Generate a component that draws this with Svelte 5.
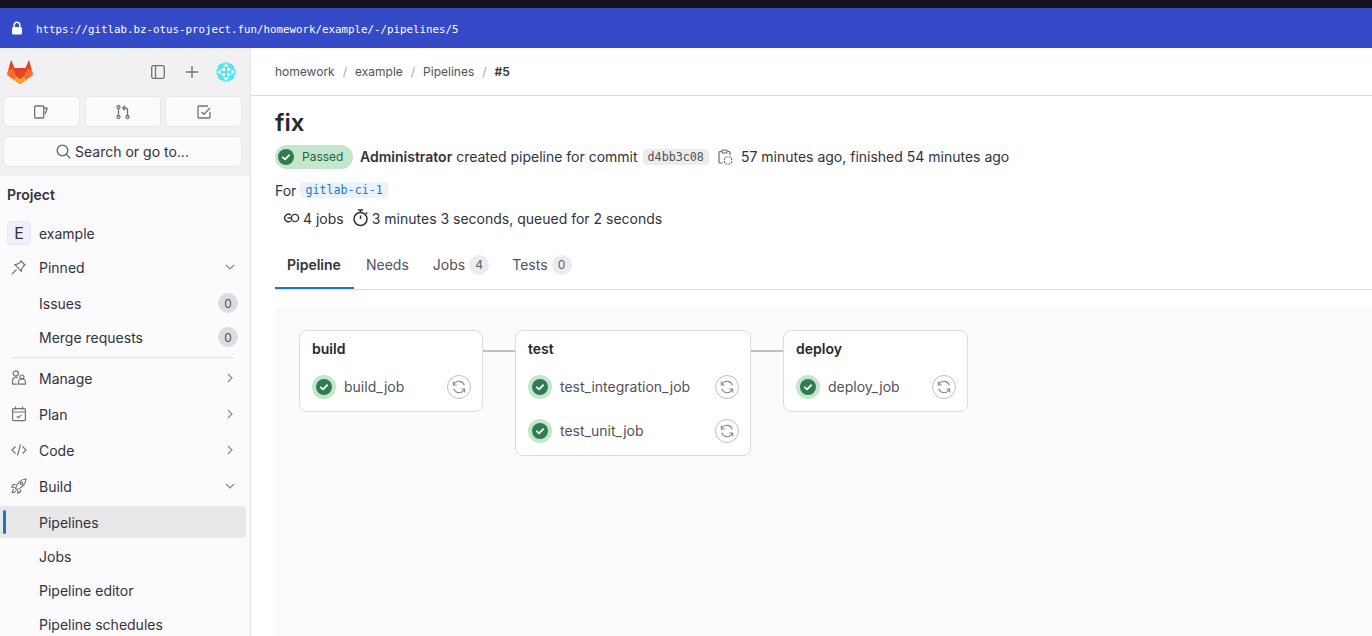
<script>
  const retry = "M13.300 6.300A5.600 5.600 0 0 0 3.700 4.200L2.300 5.800M2.300 2.600v3.400h3.400M2.700 9.700a5.600 5.600 0 0 0 9.600 2.100l1.400-1.600M13.700 13.400V10h-3.400";
  const stages = [
    { name: 'build', cls: 'w1', jobs: ['build_job'] },
    { name: 'test', cls: 'w2', jobs: ['test_integration_job', 'test_unit_job'] },
    { name: 'deploy', cls: 'w3', jobs: ['deploy_job'] }
  ];
</script>

<div class="page">
  <div class="topstrip"></div>
  <div class="urlbar">
    <svg class="lock" width="12" height="14" viewBox="0 0 12 14"><path d="M3.200 6V4a2.800 2.800 0 0 1 5.600 0v2" fill="none" stroke="#fff" stroke-width="1.500"/><rect x="1" y="6" width="10" height="7.500" rx="1.500" fill="#fff"/></svg>
    <span class="url">https://gitlab.bz-otus-project.fun/homework/example/-/pipelines/5</span>
  </div>
  <div class="body">
    <aside class="side">
      <div class="sidetop">
        <div class="logorow">
          <svg class="fox" width="26" height="25" viewBox="0 0 26 25">
            <path d="M13 24 1 15.500c-.6-.5-.8-1.200-.6-1.900L3.500 1.200c.2-.6 1-.6 1.200 0L7.500 8h11l2.800-6.800c.2-.6 1-.6 1.200 0l3.100 12.400c.2.700 0 1.400-.6 1.900z" fill="#e24329"/>
            <path d="M13 24 5.500 8.500 .9 10.500l-.5 3.100c-.2.700 0 1.400.6 1.900z" fill="#fc6d26"/>
            <path d="M13 24l7.500-15.500 4.600 2 .5 3.100c.2.700 0 1.400-.6 1.900z" fill="#fc6d26"/>
            <path d="M13 24l-6.500-4.700L9.500 16.500 13 19l3.500-2.500 3 2.800z" fill="#fca326"/>
          </svg>
          <div class="logoactions">
            <svg width="16" height="16" viewBox="0 0 16 16" fill="none" stroke="#737278" stroke-width="1.300"><rect x="1.700" y="1.700" width="12.600" height="12.600" rx="1.500"/><path d="M5.500 2v12"/></svg>
            <svg class="plus" width="14" height="14" viewBox="0 0 14 14" fill="none" stroke="#737278" stroke-width="1.400"><path d="M7 1v12M1 7h12"/></svg>
            <svg class="avatar" width="24" height="24" viewBox="0 0 24 24">
              <path d="M12 .5c1.200 2 2.500 2.800 4.500 3.200 2 .4 3.500 2 3.800 3.800.4 2 1.200 3.300 3.200 4.500-2 1.200-2.800 2.500-3.200 4.500-.3 1.800-1.800 3.400-3.800 3.800-2 .4-3.300 1.200-4.500 3.200-1.200-2-2.500-2.800-4.500-3.200-2-.4-3.500-2-3.800-3.800C3.300 14.500 2.500 13.200.5 12c2-1.200 2.800-2.500 3.200-4.500.3-1.800 1.800-3.400 3.800-3.800C9.500 3.300 10.800 2.500 12 .5z" fill="#55e2f2"/>
              <path d="M12 3.500 20.500 12 12 20.500 3.500 12z" fill="#fff"/>
              <path d="M12 .5v3M12 20.500v3M.5 12h3M20.500 12h3" stroke="#fff" stroke-width="1"/>
              <rect x="6.500" y="6.500" width="11" height="11" fill="#55e2f2"/>
              <rect x="8" y="8" width="3" height="3" fill="#fff"/><rect x="13" y="8" width="3" height="3" fill="#fff"/><rect x="8" y="13" width="3" height="3" fill="#fff"/><rect x="13" y="13" width="3" height="3" fill="#fff"/>
            </svg>
          </div>
        </div>
        <div class="tri">
          <div class="tribtn"><svg width="16" height="16" viewBox="0 0 16 16" fill="none" stroke="#737278" stroke-width="1.300"><path d="M2.700 2h7a1 1 0 0 1 1 1v10a1 1 0 0 1-1 1h-7a1 1 0 0 1-1-1V3a1 1 0 0 1 1-1zM10.700 4h2.800c.5 0 .7.400.6.800l-2.100 5.200"/></svg></div>
          <div class="tribtn"><svg width="16" height="16" viewBox="0 0 16 16" fill="none" stroke="#737278" stroke-width="1.300"><circle cx="3.500" cy="3" r="1.500"/><circle cx="3.500" cy="13" r="1.500"/><circle cx="12.500" cy="13" r="1.500"/><path d="M3.500 4.500v7M12.500 11.500V6a2 2 0 0 0-2-2H8M9.800 1.700 7.800 4l2 2.300"/></svg></div>
          <div class="tribtn last"><svg width="16" height="16" viewBox="0 0 16 16" fill="none" stroke="#737278" stroke-width="1.300"><path d="M14 8v5a1 1 0 0 1-1 1H3a1 1 0 0 1-1-1V3a1 1 0 0 1 1-1h9M5.500 8l2.300 2.300L14 4"/></svg></div>
        </div>
        <div class="search">
          <svg width="15" height="15" viewBox="0 0 15 15" fill="none" stroke="#626168" stroke-width="1.300"><circle cx="6.500" cy="6.500" r="5.300"/><path d="m10.400 10.400 3.800 3.800"/></svg>
          <span>Search or go to...</span>
        </div>
      </div>
      <div class="project">Project</div>
      <div class="item projrow"><span class="ebox">E</span><span>example</span></div>
      <div class="item h36">
        <svg class="ic" width="16" height="16" viewBox="0 0 16 16" fill="none" stroke="#737278" stroke-width="1.200"><path d="M1 15l4.600-4.600M9.500 1.500l5 5M10.500 2.500 6.300 5.200 3.800 5.700l6.500 6.500.5-2.500 2.700-4.200"/></svg>
        <span>Pinned</span><svg class="chev" width="12" height="12" viewBox="0 0 12 12" fill="none" stroke="#89888d" stroke-width="1.200"><path d="m2 4 4 4 4-4"/></svg>
      </div>
      <div class="item sub r1"><span>Issues</span><span class="count">0</span></div>
      <div class="item sub r2"><span>Merge requests</span><span class="count">0</span></div>
      <div class="divider"></div>
      <div class="item h36">
        <svg class="ic" width="16" height="16" viewBox="0 0 16 16" fill="none" stroke="#737278" stroke-width="1.200"><circle cx="4.800" cy="3.500" r="2.600"/><path d="M6.800 8.200A3 3 0 0 0 4.800 7.500a3.300 3.300 0 0 0-3.300 3.300v2.700c0 .4.300.7.700.7h3.800"/><circle cx="11" cy="7" r="2"/><path d="M7.500 12a3.500 3 0 0 1 7 0v2.200h-7z"/></svg>
        <span>Manage</span><svg class="chev" width="12" height="12" viewBox="0 0 12 12" fill="none" stroke="#89888d" stroke-width="1.200"><path d="m4 2 4 4-4 4"/></svg>
      </div>
      <div class="item h36">
        <svg class="ic" width="16" height="16" viewBox="0 0 16 16" fill="none" stroke="#737278" stroke-width="1.200"><rect x="1.600" y="2.600" width="12.800" height="12" rx="1"/><path d="M1.600 6h12.800M4.500.5v3M11.500.5v3M5.800 10.200l1.600 1.600 3-3"/></svg>
        <span>Plan</span><svg class="chev" width="12" height="12" viewBox="0 0 12 12" fill="none" stroke="#89888d" stroke-width="1.200"><path d="m4 2 4 4-4 4"/></svg>
      </div>
      <div class="item h36">
        <svg class="ic" width="16" height="16" viewBox="0 0 16 16" fill="none" stroke="#737278" stroke-width="1.200"><path d="M4.500 4.500 1 8l3.500 3.500M11.500 4.500 15 8l-3.500 3.500M9.500 2.500l-3 11"/></svg>
        <span>Code</span><svg class="chev" width="12" height="12" viewBox="0 0 12 12" fill="none" stroke="#89888d" stroke-width="1.200"><path d="m4 2 4 4-4 4"/></svg>
      </div>
      <div class="item h36">
        <svg class="ic" width="16" height="16" viewBox="0 0 16 16" fill="none" stroke="#737278" stroke-width="1.200"><path d="M5.500 11.500 4.500 10.500C6 5 10 1.500 15 1c-.5 5-4 9-9.500 10.500zM4.800 6.500H2.200L.8 9l3 .5M9.500 11.200v2.600L7 15.200l-.5-3M3 11c-1.200.8-1.700 2.200-1.700 3.700C2.800 14.700 4.200 14.200 5 13"/><circle cx="10.500" cy="5.500" r="1.200"/></svg>
        <span>Build</span><svg class="chev" width="12" height="12" viewBox="0 0 12 12" fill="none" stroke="#89888d" stroke-width="1.200"><path d="m2 4 4 4 4-4"/></svg>
      </div>
      <div class="item sub active"><span class="mark"></span><span>Pipelines</span></div>
      <div class="item sub"><span>Jobs</span></div>
      <div class="item sub"><span>Pipeline editor</span></div>
      <div class="item sub"><span>Pipeline schedules</span></div>
    </aside>
    <main class="main">
      <div class="crumbs">
        <span>homework</span><span class="sl">/</span><span>example</span><span class="sl">/</span><span>Pipelines</span><span class="sl">/</span><b>#5</b>
      </div>
      <div class="content">
        <h1>fix</h1>
        <div class="meta">
          <span class="badge">
            <svg width="16" height="16" viewBox="0 0 16 16"><circle cx="8" cy="8" r="8" fill="#2f7d4f"/><path d="m4.800 8.300 2.200 2.100 4.200-4.300" fill="none" stroke="#fff" stroke-width="1.800" stroke-linecap="round" stroke-linejoin="round"/></svg>
            <span class="passed">Passed</span>
          </span>
          <span class="who"><b>Administrator</b> created pipeline for commit</span>
          <code class="sha">d4bb3c08</code>
          <svg class="clip" width="16" height="16" viewBox="0 0 16 16" fill="none" stroke="#626168" stroke-width="1.100"><path d="M4.500 2.500H3a1 1 0 0 0-1 1V13a1 1 0 0 0 1 1h2.500M10.500 2.500H12a1 1 0 0 1 1 1V6"/><rect x="5" y="1" width="5" height="3" rx=".8"/><rect x="7.500" y="8" width="7" height="7" rx="1" stroke-dasharray="2 1.200"/></svg>
          <span class="ago">57 minutes ago, finished 54 minutes ago</span>
        </div>
        <div class="forrow">For <code class="ref">gitlab-ci-1</code></div>
        <div class="stats">
          <svg width="18" height="16" viewBox="0 0 18 16" fill="none" stroke="#333238" stroke-width="1.400"><path d="M7.800 5.200A3.700 3.700 0 1 0 7.800 10.800"/><circle cx="12" cy="8" r="3.600"/><path d="M4.500 8h3.800"/></svg>
          <span class="jobs">4 jobs</span>
          <svg class="timer" width="17" height="18" viewBox="0 0 17 18" fill="none" stroke="#333238" stroke-width="1.500"><circle cx="8.500" cy="10" r="6.500"/><path d="M6 1h5M8.500 1v2.500M8.500 6.500V10M14 3.500l1.200 1.200"/></svg>
          <span>3 minutes 3 seconds, queued for 2 seconds</span>
        </div>
        <div class="tabs">
          <div class="tab on">Pipeline</div>
          <div class="tab">Needs</div>
          <div class="tab">Jobs<span class="tc">4</span></div>
          <div class="tab tlast">Tests<span class="tc">0</span></div>
        </div>
        <div class="graph">
          {#each stages as s, i}
            {#if i > 0}<div class="link"></div>{/if}
            <div class="stage {s.cls}">
              <div class="sname">{s.name}</div>
              {#each s.jobs as j}
                <div class="job">
                  <span class="ring"><svg width="16" height="16" viewBox="0 0 16 16"><circle cx="8" cy="8" r="8" fill="#2f7d4f"/><path d="m4.800 8.300 2.200 2.100 4.200-4.300" fill="none" stroke="#fff" stroke-width="1.800" stroke-linecap="round" stroke-linejoin="round"/></svg></span>
                  <span class="jname">{j}</span>
                  <span class="retry"><svg width="16" height="16" viewBox="0 0 16 16" fill="none" stroke="#89888d" stroke-width="1.100"><path d={retry}/></svg></span>
                </div>
              {/each}
            </div>
          {/each}
        </div>
      </div>
    </main>
  </div>
</div>

<style>
  :global(body) { margin: 0; overflow: hidden; background: #fff; }
  .page { width: 1372px; height: 636px; overflow: hidden; display: flex; flex-direction: column; font-family: Inter, "Liberation Sans", sans-serif; font-size: 14px; color: #333238; }
  .topstrip { height: 8px; background: #14101f; flex: none; }
  .urlbar { height: 40px; flex: none; background: #344ac6; display: flex; align-items: center; gap: 13px; padding-left: 11px; }
  .url { font-family: "DejaVu Sans Mono", monospace; font-size: 10.800px; color: #fff; font-weight: 400; position: relative; top: 1px; }
  .body { flex: 1; display: flex; min-height: 0; }
  .side { width: 250px; flex: none; background: #fbfafd; border-right: 1px solid #e4e4e7; display: flex; flex-direction: column; overflow: hidden; }
  .side > * { flex: none; }
  .sidetop { background: #f1f1f3; height: 128px; padding: 0 3px; box-sizing: border-box; }
  .logorow { display: flex; align-items: center; justify-content: space-between; height: 48px; padding-left: 4px; padding-right: 9px; }
  .logoactions { display: flex; align-items: center; }
  .logoactions .plus { margin-left: 19px; margin-right: 15px; }
  .tri { display: flex; gap: 5px; width: 239px; }
  .tribtn { flex: 1; height: 31px; background: #fbfafd; border: 1px solid #e8e8ea; border-radius: 4px; box-sizing: border-box; display: flex; align-items: center; justify-content: center; }
  .tribtn.last { margin-left: -1px; }
  .search { margin-top: 9px; width: 239px; height: 31px; box-sizing: border-box; background: #fbfafd; border: 1px solid #e8e8ea; border-radius: 4px; display: flex; align-items: center; justify-content: center; gap: 4px; font-size: 14px; color: #333238; }
  .project { font-weight: 600; padding: 10px 7px 0; height: 30px; line-height: 17px; color: #333238; box-sizing: border-box; margin-bottom: 11px; }
  .item { display: flex; align-items: center; padding: 0 12px 0 39px; position: relative; color: #333238; }
  .projrow { height: 32px; padding-left: 7px; gap: 8px; }
  .ebox { width: 24px; height: 24px; border-radius: 4px; background: #f1effc; border: 1px solid #e8e6f4; box-sizing: border-box; display: flex; align-items: center; justify-content: center; font-size: 16px; }
  .h36 { height: 36px; }
  .ic { position: absolute; left: 11px; }
  .chev { margin-left: auto; margin-right: 2px; }
  .sub { height: 34px; }
  .r1 { margin-top: 1px; }
  .count { margin-left: auto; width: 20px; height: 20px; border-radius: 50%; background: #dcdcde; display: flex; align-items: center; justify-content: center; font-size: 12px; color: #535158; }
  .divider { margin: 3px 11px 2px; width: 223px; height: 1px; background: #e4e4e7; }
  .active { background: #e8e8ea; border-radius: 0 4px 4px 0; width: 246px; box-sizing: border-box; height: 32px; margin-top: 2px; margin-bottom: 1px; }
  .mark { position: absolute; left: 3px; top: 4px; bottom: 4px; width: 3px; border-radius: 2px; background: #1f75cb; }
  .main { flex: 1; min-width: 0; }
  .crumbs { height: 47px; border-bottom: 1px solid #dcdcde; display: flex; align-items: center; padding-left: 24px; font-size: 12px; color: #535158; gap: 7px; }
  .crumbs b { color: #333238; font-weight: 600; }
  .sl { color: #a4a3a8; margin: 0 1px; }
  .content { padding: 0 0 0 24px; }
  h1 { margin: 0; font-size: 24px; line-height: 28px; font-weight: 600; padding-top: 13px; color: #28272d; height: 35px; }
  .meta { display: flex; align-items: center; height: 24px; margin-top: 1px; font-size: 14px; }
  .meta b { font-weight: 600; }
  .badge { display: inline-flex; align-items: center; gap: 8px; height: 24px; width: 78px; box-sizing: border-box; padding-left: 3px; background: #c3e6cd; border-radius: 12px; font-size: 12px; color: #24663b; }
  .passed { padding-bottom: 2px; }
  .who { margin-left: 7px; position: relative; top: -1px; }
  .sha { font-family: "DejaVu Sans Mono", monospace; font-size: 11.700px; background: #ececef; color: #535158; padding: 0 5px; height: 16px; line-height: 16px; border-radius: 4px; margin-left: 5px; }
  .clip { margin-left: 8px; }
  .ago { margin-left: 8px; position: relative; top: -1px; }
  .forrow { margin-top: 9px; height: 24px; display: flex; align-items: center; gap: 4px; }
  .ref { font-family: "DejaVu Sans Mono", monospace; font-size: 11.700px; background: #e9f3fc; color: #1f75cb; padding: 0 5px; height: 16px; line-height: 16px; border-radius: 4px; }
  .stats { display: flex; align-items: center; height: 24px; margin-top: 4px; padding-left: 8px; }
  .jobs { margin-left: 2px; margin-right: 8px; }
  .timer { margin-right: 3px; }
  .tabs { display: flex; margin-top: 10px; border-bottom: 1px solid #dcdcde; box-sizing: border-box; height: 50px; }
  .tab { display: flex; align-items: center; padding: 0 12px; height: 49px; box-sizing: border-box; gap: 4px; color: #535158; }
  .tab.on { width: 79px; color: #333238; font-weight: 600; box-shadow: inset 0 -2px 0 #1f75cb; }
  .tlast { margin-left: -1px; }
  .tc { width: 20px; height: 20px; border-radius: 50%; background: #ececef; font-size: 12px; display: flex; align-items: center; justify-content: center; color: #626168; }
  .graph { margin-top: 16px; height: 400px; background: #fbfafd; border-radius: 8px 0 0 0; display: flex; align-items: flex-start; padding: 24px 0 0 24px; }
  .stage { background: #fff; border: 1px solid #dcdcde; border-radius: 8px; box-sizing: border-box; padding: 8px 12px 0; }
  .w1 { width: 184px; height: 82px; }
  .w2 { width: 236px; height: 126px; }
  .w3 { width: 185px; height: 82px; }
  .link { width: 32px; height: 2px; background: #bfbfc3; margin-top: 20px; }
  .sname { font-weight: 600; height: 20px; line-height: 20px; color: #28272d; margin-bottom: 16px; }
  .job { display: flex; align-items: center; height: 24px; margin-bottom: 20px; color: #535158; }
  .ring { width: 24px; height: 24px; border-radius: 50%; background: #c3e6cd; display: flex; align-items: center; justify-content: center; flex: none; }
  .jname { margin-left: 8px; padding-bottom: 2px; }
  .retry { margin-left: auto; margin-right: -1px; width: 24px; height: 24px; box-sizing: border-box; border: 1px solid #bfbfc3; border-radius: 50%; display: flex; align-items: center; justify-content: center; }
</style>
